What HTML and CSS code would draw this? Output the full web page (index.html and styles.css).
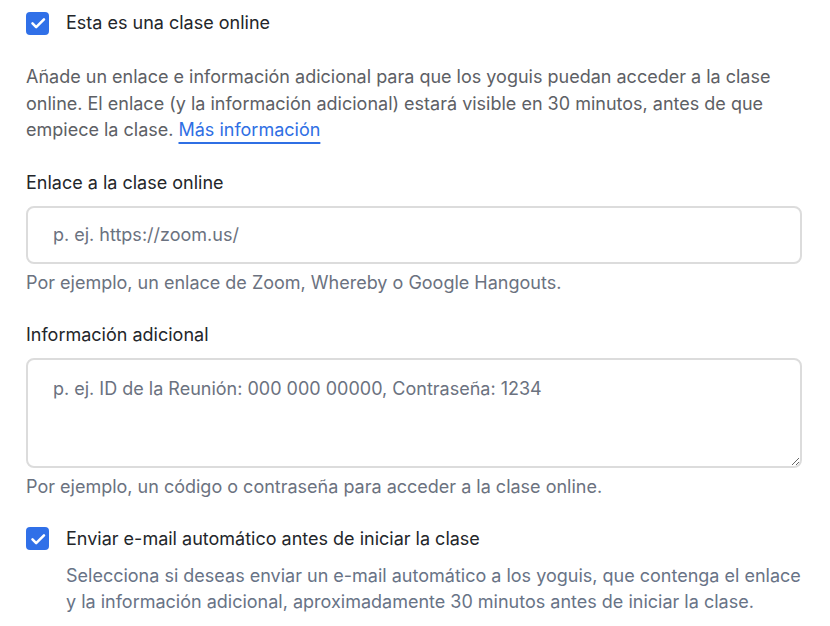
FILE: index.html
```html
<!DOCTYPE html>
<html lang="es">
<head>
<meta charset="utf-8">
<link rel="stylesheet" href="styles.css">
</head>
<body>
<div class="form">
  <label class="check-row">
    <span class="checkbox"><svg viewBox="0 0 24 24" width="22" height="22"><path d="M6 12.5l4 4L18.5 8" fill="none" stroke="#fff" stroke-width="2.8" stroke-linecap="round" stroke-linejoin="round"/></svg></span>
    <span class="check-label">Esta es una clase online</span>
  </label>
  <p class="intro">Añade un enlace e información adicional para que los yoguis puedan acceder a la clase online. El enlace (y la información adicional) estará visible en 30 minutos, antes de que empiece la clase. <a href="#" class="link">Más información</a></p>

  <div class="field">
    <label class="field-label">Enlace a la clase online</label>
    <input class="input" type="text" placeholder="p. ej. https://zoom.us/">
    <p class="help">Por ejemplo, un enlace de Zoom, Whereby o Google Hangouts.</p>
  </div>

  <div class="field">
    <label class="field-label">Información adicional</label>
    <textarea class="textarea" placeholder="p. ej. ID de la Reunión: 000 000 00000, Contraseña: 1234"></textarea>
    <p class="help">Por ejemplo, un código o contraseña para acceder a la clase online.</p>
  </div>

  <label class="check-row check-row-2">
    <span class="checkbox"><svg viewBox="0 0 24 24" width="22" height="22"><path d="M6 12.5l4 4L18.5 8" fill="none" stroke="#fff" stroke-width="2.8" stroke-linecap="round" stroke-linejoin="round"/></svg></span>
    <span class="check-label">Enviar e-mail automático antes de iniciar la clase</span>
  </label>
  <p class="check-desc">Selecciona si deseas enviar un e-mail automático a los yoguis, que contenga el enlace y la información adicional, aproximadamente 30 minutos antes de iniciar la clase.</p>
</div>
</body>
</html>
```

FILE: styles.css
```css
html, body {
  margin: 0;
  padding: 0;
  background: #ffffff;
}

body {
  font-family: Inter, "Noto Sans", "Liberation Sans", sans-serif;
  font-size: 18px;
  line-height: 26px;
  color: #24272b;
}

.form {
  width: 776px;
  padding: 10px 0 0 26px;
}

.check-row {
  display: flex;
  align-items: center;
  gap: 17px;
  height: 26px;
}

.checkbox {
  width: 23px;
  height: 23px;
  border-radius: 4px;
  background: #3070e8;
  display: flex;
  align-items: center;
  justify-content: center;
  flex: none;
}

.check-label {
  color: #23262a;
}

.intro {
  margin: 28px 0 0;
  line-height: 26.5px;
  color: #5d6065;
}

.link {
  color: #2f6fe4;
  text-decoration: underline;
  text-decoration-thickness: 2px;
  text-underline-offset: 6px;
}

.field {
  margin-top: 26px;
  display: flex;
  flex-direction: column;
}

.field-label {
  color: #23262a;
}

.input,
.textarea {
  font-family: inherit;
  font-size: 18px;
  line-height: 26px;
  color: #23262a;
  box-sizing: border-box;
  width: 776px;
  margin-top: 10px;
  border: 2px solid #dcdcdc;
  border-radius: 8px;
  padding: 0 25px;
  background: #fff;
  outline: none;
}

.input {
  height: 58px;
}

.textarea {
  height: 110px;
  padding-top: 16px;
  resize: vertical;
  display: block;
}

.input::placeholder,
.textarea::placeholder {
  color: #6b7280;
  opacity: 1;
}

.help {
  margin: 6px 0 0;
  color: #6b7280;
}

.check-row-2 {
  margin-top: 26px;
}

.check-desc {
  margin: 11px 0 0 40px;
  color: #687386;
}
```
